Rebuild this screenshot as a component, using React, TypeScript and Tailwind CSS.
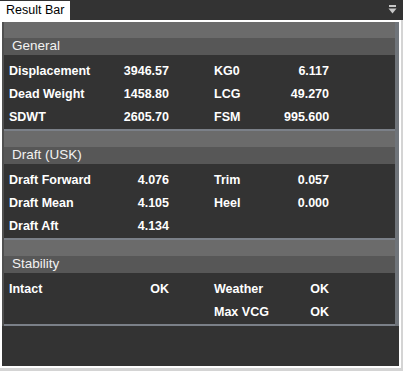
import React from 'react';

type Row = [string, string, string, string];

const sections: { title: string; rows: Row[] }[] = [
  {
    title: 'General',
    rows: [
      ['Displacement', '3946.57', 'KG0', '6.117'],
      ['Dead Weight', '1458.80', 'LCG', '49.270'],
      ['SDWT', '2605.70', 'FSM', '995.600'],
    ],
  },
  {
    title: 'Draft (USK)',
    rows: [
      ['Draft Forward', '4.076', 'Trim', '0.057'],
      ['Draft Mean', '4.105', 'Heel', '0.000'],
      ['Draft Aft', '4.134', '', ''],
    ],
  },
  {
    title: 'Stability',
    rows: [
      ['Intact', 'OK', 'Weather', 'OK'],
      ['', '', 'Max VCG', 'OK'],
    ],
  },
];

const Section: React.FC<{ title: string; rows: Row[] }> = ({ title, rows }) => (
  <div className="border-b-2 border-[#7b8088]">
    <div className="h-[16px] bg-[#6b6b6b]" />
    <div className="h-[17px] bg-[#575757] pl-[8px] text-[13.5px] leading-[15px] text-[#f2f2f2]">
      {title}
    </div>
    <div className="bg-[#333333] pt-[5px] pl-[5px] font-bold text-[12.5px] text-white">
      {rows.map((r, i) => (
        <div key={i} className="flex h-[23px] items-center">
          <span className="w-[100px]">{r[0]}</span>
          <span className="w-[60px] text-right">{r[1]}</span>
          <span className="ml-[45px] w-[70px]">{r[2]}</span>
          <span className="w-[45px] text-right">{r[3]}</span>
        </div>
      ))}
    </div>
  </div>
);

export default function App() {
  return (
    <div
      className="flex h-[371px] w-[403px] flex-col bg-[#d4d4d4]"
      style={{ fontFamily: '"Liberation Sans", Arial, sans-serif' }}
    >
      <div className="flex h-[20px] items-end justify-between bg-[#333333]">
        <div className="flex h-[19px] items-center bg-white px-[6px] text-[12.5px] text-black">
          Result Bar
        </div>
        <svg width="9" height="10" viewBox="0 0 9 10" className="mb-[5px] mr-[6px]">
          <rect x="1" y="0" width="7" height="2" fill="#c8c8c8" />
          <path d="M0.5 3.5 H8.5 L4.5 8.5 Z" fill="#c8c8c8" />
        </svg>
      </div>
      <div className="mr-[2px] mb-[3px] flex-1 border-2 border-white bg-[#333333]">
        <div className="border-l-2 border-r-4 border-l-[#505050] border-r-[#6f747a]">
          {sections.map((s) => (
            <Section key={s.title} title={s.title} rows={s.rows} />
          ))}
        </div>
      </div>
    </div>
  );
}
